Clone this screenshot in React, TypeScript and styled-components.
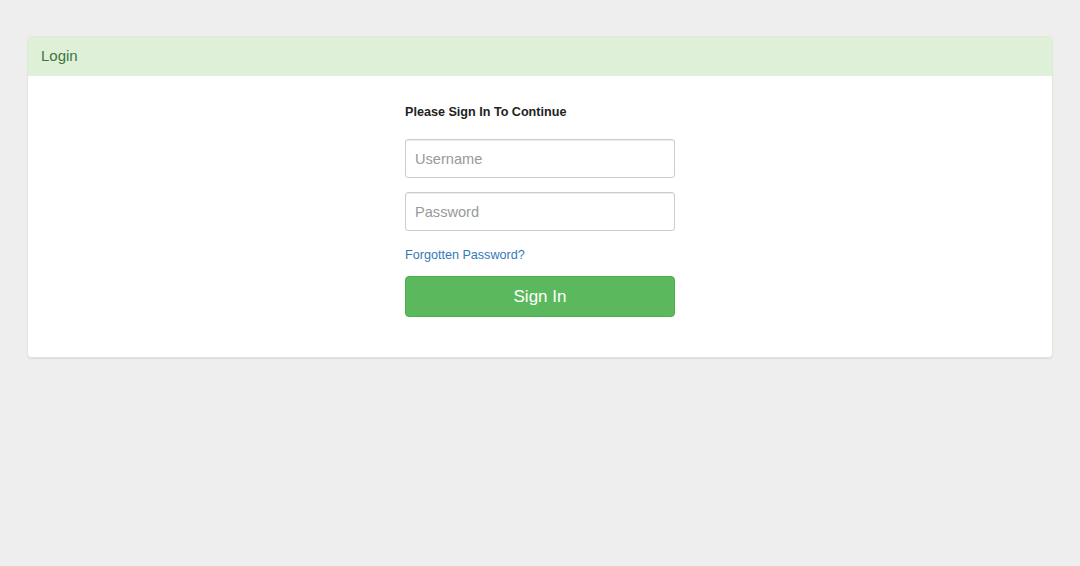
import styled, { createGlobalStyle } from 'styled-components';

const GlobalStyle = createGlobalStyle`
  html, body {
    margin: 0;
    padding: 0;
    background: #eeeeee;
    font-family: "Liberation Sans", Arial, sans-serif;
    color: #333;
  }
  * { box-sizing: border-box; }
`;

const Page = styled.div`
  padding: 36px 27px;
`;

const Panel = styled.section`
  background: #fff;
  border: 1px solid #dfe9d6;
  border-radius: 4px;
  box-shadow: 0 1px 1px rgba(0, 0, 0, 0.08);
`;

const PanelHeading = styled.div`
  background: #dff0d8;
  color: #3c763d;
  border-radius: 3px 3px 0 0;
  padding: 9px 13px 10px;
  font-size: 15px;
  line-height: 20px;
`;

const PanelBody = styled.div`
  display: flex;
  justify-content: center;
  padding: 27px 15px 40px;
`;

const Form = styled.form`
  width: 270px;
  display: flex;
  flex-direction: column;
`;

const Title = styled.h4`
  margin: 0 0 18px;
  font-size: 12.6px;
  line-height: 18px;
  font-weight: bold;
  color: #222;
`;

const Input = styled.input`
  height: 39px;
  width: 100%;
  margin-bottom: 14px;
  padding: 6px 9px;
  border: 1px solid #ccc;
  border-radius: 3px;
  font-family: inherit;
  font-size: 14.6px;
  color: #555;
  box-shadow: inset 0 1px 1px rgba(0, 0, 0, 0.075);
  &::placeholder { color: #999; }
`;

const Link = styled.a`
  font-size: 12.6px;
  line-height: 18px;
  color: #337ab7;
  text-decoration: none;
  margin-top: 1px;
  margin-bottom: 12px;
`;

const Button = styled.button`
  height: 41px;
  width: 100%;
  background: #5cb85c;
  border: 1px solid #4cae4c;
  border-radius: 4px;
  color: #fff;
  font-family: inherit;
  font-size: 17px;
  cursor: pointer;
`;

export default function App() {
  return (
    <>
      <GlobalStyle />
      <Page>
        <Panel>
          <PanelHeading>Login</PanelHeading>
          <PanelBody>
            <Form onSubmit={(e) => e.preventDefault()}>
              <Title>Please Sign In To Continue</Title>
              <Input type="text" placeholder="Username" />
              <Input type="password" placeholder="Password" />
              <Link href="#">Forgotten Password?</Link>
              <Button type="submit">Sign In</Button>
            </Form>
          </PanelBody>
        </Panel>
      </Page>
    </>
  );
}
